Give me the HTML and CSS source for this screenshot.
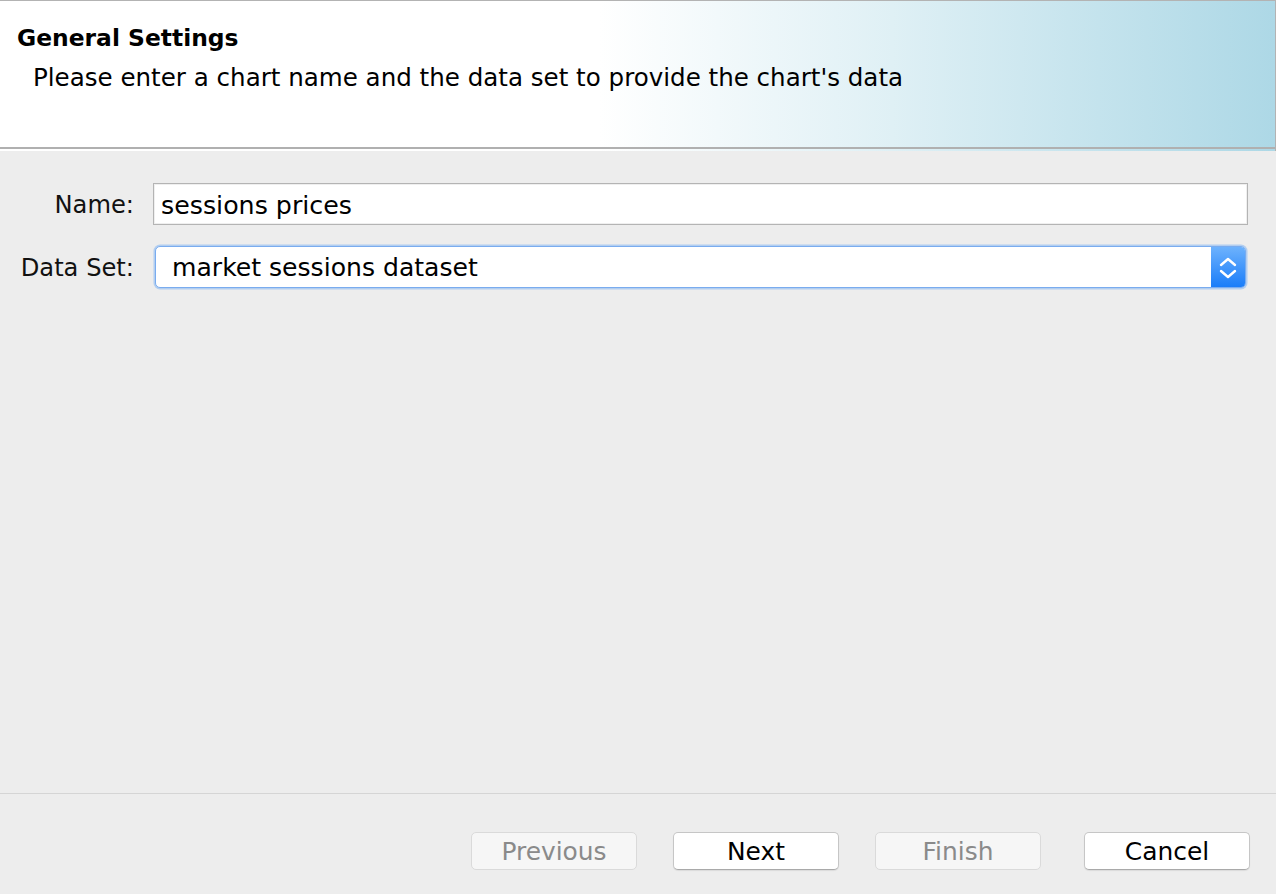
FILE: index.html
```html
<!DOCTYPE html>
<html lang="en">
<head>
<meta charset="utf-8">
<title>General Settings</title>
<link rel="stylesheet" href="styles.css">
</head>
<body>
<div class="dialog">
  <header class="header">
    <div class="header-inner">
      <h1 class="title">General Settings</h1>
      <p class="desc">Please enter a chart name and the data set to provide the chart's data</p>
    </div>
  </header>
  <main class="form">
    <label class="label" for="name">Name:</label>
    <div class="field text-field"><span class="value">sessions prices</span></div>
    <label class="label">Data Set:</label>
    <div class="combo">
      <span class="combo-value">market sessions dataset</span>
      <span class="combo-btn">
        <svg width="34" height="40" viewBox="0 0 34 40" aria-hidden="true">
          <path d="M10 18 L17 12 L24 18" fill="none" stroke="#fff" stroke-width="2.4" stroke-linecap="round" stroke-linejoin="round"/>
          <path d="M10 24 L17 30 L24 24" fill="none" stroke="#fff" stroke-width="2.4" stroke-linecap="round" stroke-linejoin="round"/>
        </svg>
      </span>
    </div>
  </main>
  <footer class="footer">
    <button class="btn disabled">Previous</button>
    <button class="btn">Next</button>
    <button class="btn disabled">Finish</button>
    <button class="btn cancel">Cancel</button>
  </footer>
</div>
</body>
</html>
```
FILE: styles.css
```css
* { box-sizing: border-box; }
html, body { margin: 0; padding: 0; }
body {
  background: #ededed;
  font-family: "DejaVu Sans", "Liberation Sans", sans-serif;
  color: #111;
}
.dialog {
  display: flex;
  flex-direction: column;
  height: 894px;
}
.header {
  border-top: 1px solid #b3b3b3;
  border-right: 1px solid #b3b3b3;
  background: linear-gradient(to right, #ffffff 0%, #ffffff 47%, #dff0f5 70%, #add8e6 100%);
  padding-bottom: 2px;
}
.header-inner {
  height: 148px;
  border-bottom: 2px solid #b0b0b0;
  padding: 23px 0 0 17px;
}
.title {
  margin: 0;
  font-size: 23.4px;
  line-height: 28px;
  font-weight: bold;
  color: #000;
}
.desc {
  margin: 12px 0 0 16px;
  font-size: 24.55px;
  line-height: 28px;
  color: #000;
}
.form {
  flex: 1;
  display: grid;
  grid-template-columns: 115px 1fr;
  column-gap: 19px;
  row-gap: 21px;
  align-content: start;
  padding: 32px 28px 0 19px;
}
.label {
  font-size: 24.2px;
  text-align: right;
  align-self: center;
  padding-top: 2px;
  color: #111;
}
.text-field {
  height: 42px;
  background: #fff;
  border: 1px solid #b4b4b4;
  box-shadow: inset 0 0 0 1px #efefef;
  display: flex;
  align-items: center;
  padding: 2px 0 0 7px;
  font-size: 25.3px;
  color: #000;
}
.combo {
  height: 42px;
  margin: 0 2px;
  display: flex;
  align-items: stretch;
  background: #fff;
  border: 1px solid #7aacef;
  border-radius: 5px;
  box-shadow: 0 0 0 1.5px rgba(130, 180, 242, 0.55);
  overflow: hidden;
}
.combo-value {
  flex: 1;
  display: flex;
  align-items: center;
  padding: 1px 0 0 16px;
  font-size: 25.1px;
  color: #000;
}
.combo-btn {
  width: 34px;
  background: linear-gradient(#6db2fd, #1a7df9);
  display: flex;
  align-items: center;
  justify-content: center;
}
.footer {
  border-top: 1px solid #d5d5d5;
  height: 101px;
  display: flex;
  justify-content: flex-end;
  align-items: flex-start;
  padding: 38px 26px 0 0;
  gap: 36px;
}
.btn {
  width: 166px;
  height: 38px;
  background: #fff;
  border: 1px solid #c6c6c6;
  border-bottom-color: #a9a9a9;
  border-radius: 5px;
  box-shadow: 0 1px 1px rgba(0, 0, 0, 0.08);
  font-family: "DejaVu Sans", "Liberation Sans", sans-serif;
  font-size: 24.9px;
  color: #000;
  padding: 2px 0 0 0;
  line-height: 1;
}
.btn.disabled {
  background: #f6f6f6;
  border-color: #dadada;
  box-shadow: none;
  color: #8a8a8a;
}
.btn.cancel { margin-left: 7px; }
```
